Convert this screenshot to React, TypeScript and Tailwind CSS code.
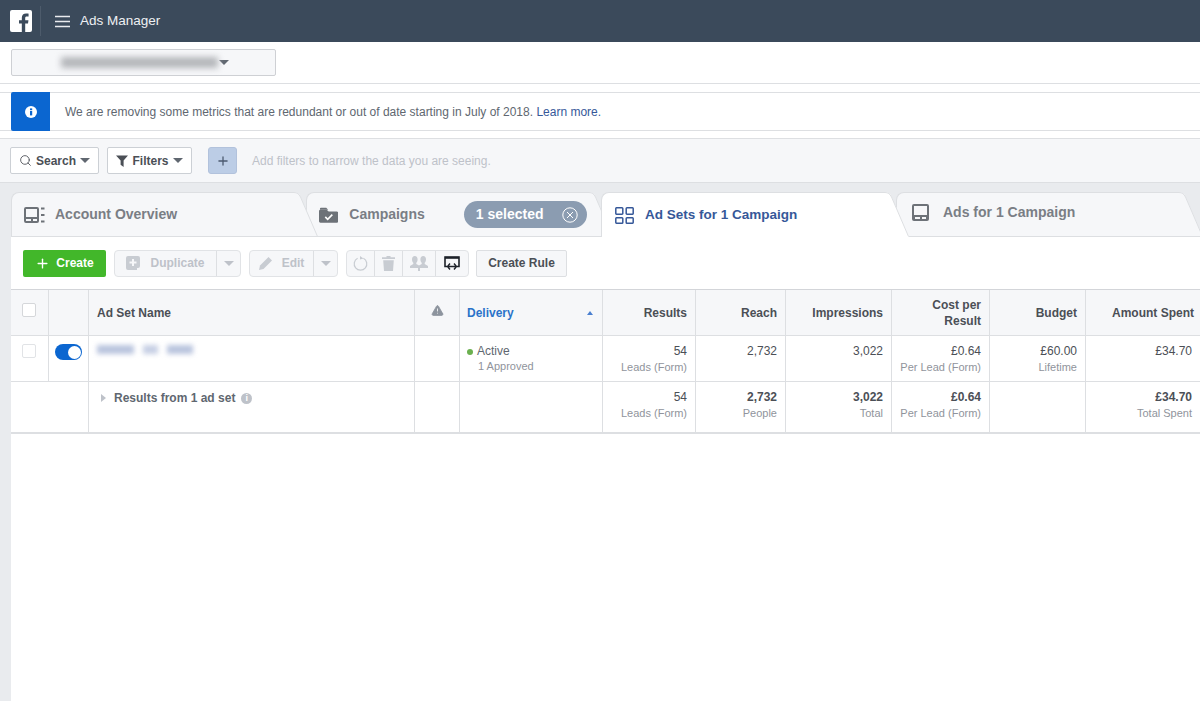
import type { ReactNode } from 'react';
import { Plus, Search, TriangleAlert } from 'lucide-react';

const Caret = ({ className = 'border-t-[#606770]' }: { className?: string }) => (
  <span className={`inline-block h-0 w-0 border-x-[5px] border-t-[5px] border-x-transparent ${className}`} />
);

function FbLogo() {
  return (
    <svg width="22" height="22" viewBox="0 0 22 22">
      <rect x="0" y="0" width="22" height="22" rx="2" fill="#fff" />
      <path
        d="M15.2 22v-8.4h2.8l.45-3.3H15.2V8.2c0-.95.27-1.6 1.63-1.6h1.74V3.65c-.3-.04-1.33-.13-2.53-.13-2.5 0-4.22 1.53-4.22 4.33v2.45H9v3.3h2.82V22z"
        fill="#3b4a5b"
      />
    </svg>
  );
}

function TabEar({ active }: { active?: boolean }) {
  const fill = active ? '#fff' : '#f6f7f9';
  return (
    <svg width="26" height="45" viewBox="0 0 26 45" className="shrink-0">
      <path d="M0 0H2C5 0 7 1.5 8.5 4.5L26 45H0Z" fill={fill} />
      <path d="M0 .5H2C5 .5 7 2 8.5 5L25.5 44.5" fill="none" stroke="#dddfe2" />
      {!active && <path d="M0 44.5H26" stroke="#dddfe2" />}
    </svg>
  );
}

function Tab({
  width,
  active,
  className = '',
  children,
}: {
  width: string;
  active?: boolean;
  className?: string;
  children: ReactNode;
}) {
  return (
    <div className={`relative flex h-[45px] shrink-0 ${className}`}>
      <div
        className={`flex items-center rounded-tl-lg border-t border-l border-[#dddfe2] ${width} ${
          active ? 'bg-white' : 'border-b bg-[#f6f7f9]'
        }`}
      >
        {children}
      </div>
      <TabEar active={active} />
    </div>
  );
}

const Sep = () => <span className="h-full w-px bg-[#dddfe2]" />;

function DisabledButton({ icon, label, width }: { icon: ReactNode; label: string; width: string }) {
  return (
    <div className={`flex h-[27px] items-center rounded-sm border border-[#e1e3e6] bg-[#f6f7f9] text-[12px] font-bold text-[#bec2c9] ${width}`}>
      <span className="flex flex-1 items-center justify-center gap-[10px]">
        {icon}
        {label}
      </span>
      <Sep />
      <span className="flex w-[23px] justify-center">
        <Caret className="border-t-[#bec2c9]" />
      </span>
    </div>
  );
}

const COLS = 'grid-cols-[38px_40px_326px_45px_143px_93px_90px_106px_98px_96px_114px]';
const CELL = 'border-r border-[#dddfe2]';

function Metric({ value, sub, bold }: { value: string; sub?: string; bold?: boolean }) {
  return (
    <div className={`${CELL} px-2 pt-[8px] text-right last:border-r-0`}>
      <div className={`text-[12px] leading-[15px] text-[#4b4f56] ${bold ? 'font-bold' : ''}`}>{value}</div>
      {sub && <div className="mt-[1px] text-[11px] leading-[15px] text-[#90949c]">{sub}</div>}
    </div>
  );
}

function HeadCell({ children, className = '' }: { children: ReactNode; className?: string }) {
  return (
    <div className={`${CELL} flex items-center justify-end px-2 text-right text-[12px] leading-[16px] font-bold text-[#4b4f56] last:border-r-0 ${className}`}>
      {children}
    </div>
  );
}

const CheckBox = ({ faint }: { faint?: boolean }) => (
  <span className={`block h-[14px] w-[14px] rounded-[2px] border bg-white ${faint ? 'border-[#e1e3e6]' : 'border-[#d5d7da]'}`} />
);

export default function App() {
  return (
    <div className="flex h-[701px] w-full flex-col overflow-hidden bg-white font-['Liberation_Sans',Arial,sans-serif]">
      {/* top bar */}
      <header className="flex h-[42px] shrink-0 items-center bg-[#3b4a5b] pl-[10px]">
        <FbLogo />
        <span className="ml-[8px] h-[30px] w-px bg-[#4d5b6b]" />
        <svg width="15" height="13" viewBox="0 0 15 13" className="ml-[14px]">
          <path d="M0 1.5H15M0 6.5H15M0 11.5H15" stroke="#e9ebee" strokeWidth="1.3" />
        </svg>
        <span className="ml-[10px] text-[13.5px] text-[#eef0f3]">Ads Manager</span>
      </header>

      {/* account picker */}
      <div className="flex h-[42px] shrink-0 items-center border-b border-[#dddfe2] pl-[11px]">
        <div className="flex h-[27px] w-[265px] items-center rounded-[2px] border border-[#ced0d4] bg-[#f6f7f9] pl-[49px]">
          <span className="h-[11px] w-[157px] bg-[#b4b6ba] blur-[3px]" />
          <span className="ml-[1px] flex">
            <Caret />
          </span>
        </div>
      </div>

      {/* notice */}
      <div className="mt-[8px] flex h-[39px] shrink-0 items-center border-y border-[#dddfe2] pl-[11px]">
        <div className="flex h-[39px] w-[39px] items-center justify-center rounded-l-[2px] bg-[#0b66d0]">
          <svg width="12" height="12" viewBox="0 0 12 12">
            <circle cx="6" cy="6" r="6" fill="#fff" />
            <rect x="5" y="5" width="2.2" height="4.4" fill="#0b66d0" />
            <rect x="5" y="2.4" width="2.2" height="1.8" fill="#0b66d0" />
          </svg>
        </div>
        <p className="ml-[15px] text-[12px] text-[#606770]">
          We are removing some metrics that are redundant or out of date starting in July of 2018.{' '}
          <span className="text-[#365899]">Learn more.</span>
        </p>
      </div>

      {/* filters */}
      <div className="mt-[7px] flex h-[45px] shrink-0 items-center border-y border-[#dddfe2] bg-[#f6f7f9] pl-[10px]">
        <button className="flex h-[27px] w-[89px] items-center justify-center gap-[4px] rounded-[2px] border border-[#ccd0d5] bg-white text-[12px] font-bold text-[#4b4f56]">
          <Search size={13} strokeWidth={1.6} />
          Search
          <Caret />
        </button>
        <button className="ml-[8px] flex h-[27px] w-[85px] items-center justify-center gap-[4px] rounded-[2px] border border-[#ccd0d5] bg-white text-[12px] font-bold text-[#4b4f56]">
          <svg width="12" height="12" viewBox="0 0 12 12">
            <path d="M0 .5H12L7.6 5.6V12L4.6 9.8V5.6Z" fill="#4b4f56" />
          </svg>
          Filters
          <Caret />
        </button>
        <button className="ml-[16px] flex h-[27px] w-[29px] items-center justify-center rounded-[3px] border border-[#b2c2dc] bg-[#bccde6] text-[#4b5a70]">
          <Plus size={14} strokeWidth={2.2} />
        </button>
        <span className="ml-[15px] text-[12px] text-[#bec2c9]">Add filters to narrow the data you are seeing.</span>
      </div>

      {/* main area */}
      <div className="flex min-h-0 flex-1 bg-[#e9ebee] pl-[11px]">
        <div className="flex min-w-0 flex-1 flex-col">
          {/* tabs */}
          <div className="flex h-[54px] shrink-0 items-end overflow-hidden">
            <Tab width="w-[281px]" className="z-20">
              <svg width="21" height="16" viewBox="0 0 21 16" className="ml-[12px]">
                <path d="M2 0H13a2 2 0 0 1 2 2V14a2 2 0 0 1-2 2H2a2 2 0 0 1-2-2V2a2 2 0 0 1 2-2ZM2 2V10H13V2ZM2 12V14H7V12ZM9 12V14H13V12Z" fill="#6d7278" fillRule="evenodd" />
                <path d="M17 1.5H20.5M17 8H20.5M17 14.5H20.5" stroke="#6d7278" strokeWidth="1.8" />
              </svg>
              <span className="ml-[10px] text-[14px] font-bold text-[#7a7e85]">Account Overview</span>
            </Tab>
            <Tab width="w-[281px]" className="z-10 -ml-[12px]">
              <svg width="20" height="16" viewBox="0 0 20 16" className="ml-[12px]">
                <path d="M1.5 2.5H8L10 4.5H18.5A1.5 1.5 0 0 1 20 6V14.5A1.5 1.5 0 0 1 18.5 16H1.5A1.5 1.5 0 0 1 0 14.5V4A1.5 1.5 0 0 1 1.5 2.5Z" fill="#6d7278" />
                <path d="M1 2.2V1.4A1 1 0 0 1 2 .4H7.5L9.5 2.6H1Z" fill="#6d7278" />
                <path d="M6.5 10L9 12.5L13.8 7.6" fill="none" stroke="#fff" strokeWidth="1.7" />
              </svg>
              <span className="ml-[11px] text-[14px] font-bold text-[#7a7e85]">Campaigns</span>
              <span className="ml-[39px] flex h-[27px] w-[127px] items-center justify-between rounded-full bg-[#8b9cb1] pr-[9px] pl-[12px] text-[14px] font-bold text-white">
                1 selected
                <svg width="16" height="16" viewBox="0 0 16 16">
                  <circle cx="8" cy="8" r="7.2" fill="none" stroke="#fff" strokeWidth="1" />
                  <path d="M5 5L11 11M11 5L5 11" stroke="#fff" strokeWidth="1" />
                </svg>
              </span>
            </Tab>
            <Tab width="w-[282px]" active className="z-30 -ml-[12px]">
              <svg width="19" height="17" viewBox="0 0 19 17" className="ml-[13px]">
                <path d="M1.5 .8H7A.8.8 0 0 1 7.8 1.6V6.4A.8.8 0 0 1 7 7.2H1.5A.8.8 0 0 1 .8 6.4V1.6A.8.8 0 0 1 1.5.8ZM12 .8H17.5A.8.8 0 0 1 18.2 1.6V6.4A.8.8 0 0 1 17.5 7.2H12A.8.8 0 0 1 11.2 6.4V1.6A.8.8 0 0 1 12 .8ZM1.5 10.8H7A.8.8 0 0 1 7.8 11.6V15.4A.8.8 0 0 1 7 16.2H1.5A.8.8 0 0 1 .8 15.4V11.6A.8.8 0 0 1 1.5 10.8ZM12 10.8H17.5A.8.8 0 0 1 18.2 11.6V15.4A.8.8 0 0 1 17.5 16.2H12A.8.8 0 0 1 11.2 15.4V11.6A.8.8 0 0 1 12 10.8Z" fill="none" stroke="#365899" strokeWidth="1.5" />
              </svg>
              <span className="ml-[11px] text-[13.5px] font-bold text-[#365899]">Ad Sets for 1 Campaign</span>
            </Tab>
            <Tab width="w-[281px]" className="z-10 -ml-[13px]">
              <svg width="17" height="17" viewBox="0 0 17 17" className="ml-[15px] -mt-[4px]">
                <path d="M2 0H15A2 2 0 0 1 17 2V15A2 2 0 0 1 15 17H2A2 2 0 0 1 0 15V2A2 2 0 0 1 2 0ZM2 2V11H15V2ZM3 13V15H8V13ZM10 13V15H14V13Z" fill="#6d7278" fillRule="evenodd" />
              </svg>
              <span className="ml-[14px] -mt-[4px] text-[14px] font-bold text-[#7a7e85]">Ads for 1 Campaign</span>
            </Tab>
          </div>

          <div className="min-h-0 flex-1 bg-white">
            {/* toolbar */}
            <div className="flex h-[52px] items-center pl-[12px]">
              <button className="flex h-[27px] w-[83px] items-center justify-center gap-[6px] rounded-[2px] bg-[#42b72a] text-[12px] font-bold text-white">
                <Plus size={15} strokeWidth={2.2} />
                Create
              </button>
              <div className="ml-[8px] flex items-center gap-[8px]">
                <DisabledButton
                  width="w-[127px]"
                  label="Duplicate"
                  icon={
                    <svg width="14" height="14" viewBox="0 0 14 14">
                      <path d="M2 0H12A2 2 0 0 1 14 2V10A2 2 0 0 1 12 12H11V14H2A2 2 0 0 1 0 12V2A2 2 0 0 1 2 0ZM6 3V5.5H3.5V7.5H6V10H8V7.5H10.5V5.5H8V3Z" fill="#c8ccd2" fillRule="evenodd" />
                    </svg>
                  }
                />
                <DisabledButton
                  width="w-[89px]"
                  label="Edit"
                  icon={
                    <svg width="13" height="13" viewBox="0 0 13 13">
                      <path d="M9.5 0L13 3.5L4.5 12L0 13L1 8.5Z" fill="#c8ccd2" />
                    </svg>
                  }
                />
                <div className="flex h-[27px] items-stretch rounded-sm border border-[#e1e3e6] bg-[#f6f7f9]">
                  <span className="flex w-[27px] items-center justify-center">
                    <svg width="15" height="15" viewBox="0 0 15 15">
                      <path d="M4.6 2.2A6.3 6.3 0 1 0 10.4 2.2" fill="none" stroke="#c8ccd2" strokeWidth="1.2" />
                      <path d="M7 0V3.5L10.5 2.4Z" fill="#c8ccd2" />
                    </svg>
                  </span>
                  <Sep />
                  <span className="flex w-[27px] items-center justify-center">
                    <svg width="13" height="15" viewBox="0 0 13 15">
                      <path d="M4.5 0H8.5V1.2H13V3H0V1.2H4.5ZM1.2 4.2H11.8L11 15H2Z" fill="#c8ccd2" />
                    </svg>
                  </span>
                  <Sep />
                  <span className="flex w-[32px] items-center justify-center">
                    <svg width="18" height="15" viewBox="0 0 18 15">
                      <path d="M4.8 0C6.6 0 7.6 1.5 7.6 3.2C7.6 5 7 6 6.3 6.8V8L9 9.6L11.7 8V6.8C11 6 10.4 5 10.4 3.2C10.4 1.5 11.4 0 13.2 0S16 1.5 16 3.2C16 5 15.4 6 14.7 6.8V8L18 10V12H10V15H8V12H0V10L3.3 8V6.8C2.6 6 2 5 2 3.2C2 1.5 3 0 4.8 0Z" fill="#c8ccd2" />
                    </svg>
                  </span>
                  <Sep />
                  <span className="flex w-[32px] items-center justify-center">
                    <svg width="16" height="15" viewBox="0 0 16 15">
                      <path d="M3 10.5H1V1H15V10.5H13" fill="none" stroke="#1d2129" strokeWidth="1.6" />
                      <path d="M1 1.8H15" stroke="#1d2129" strokeWidth="2" />
                      <path d="M6 7.5L3.5 10.5L6 13.5M10 7.5L12.5 10.5L10 13.5M3.5 10.5H12.5" fill="none" stroke="#1d2129" strokeWidth="1.4" />
                    </svg>
                  </span>
                </div>
              </div>
              <button className="ml-[7px] h-[27px] w-[91px] rounded-[2px] border border-[#dddfe2] bg-[#f6f7f9] text-[12px] font-bold text-[#4b4f56]">
                Create Rule
              </button>
            </div>

            {/* table */}
            <div className="border-y-2 border-t border-[#d3d5d9] [border-bottom-color:#dddfe2]">
              <div className={`grid h-[46px] ${COLS} border-b border-[#dddfe2] bg-[#f6f7f9]`}>
                <div className={`${CELL} flex justify-center pt-[13px] pr-[1px]`}>
                  <CheckBox />
                </div>
                <div className={CELL} />
                <div className={`${CELL} flex items-center pl-[8px] text-[12px] font-bold text-[#4b4f56]`}>Ad Set Name</div>
                <div className={`${CELL} flex justify-center pt-[14px]`}>
                  <TriangleAlert size={13} fill="#8d949e" stroke="#8d949e" strokeWidth={1.5} className="[&>path:nth-child(n+2)]:stroke-white" />
                </div>
                <div className={`${CELL} flex items-center justify-between pr-[9px] pl-[7px] text-[12px] font-bold text-[#2a73c9]`}>
                  Delivery
                  <span className="h-0 w-0 border-x-[3.5px] border-b-[4px] border-x-transparent border-b-[#4a7fd0]" />
                </div>
                <HeadCell>Results</HeadCell>
                <HeadCell>Reach</HeadCell>
                <HeadCell>Impressions</HeadCell>
                <HeadCell>
                  Cost per
                  <br />
                  Result
                </HeadCell>
                <HeadCell>Budget</HeadCell>
                <HeadCell className="pr-[6px]">Amount Spent</HeadCell>
              </div>

              <div className={`grid h-[46px] ${COLS} border-b border-[#dddfe2]`}>
                <div className={`${CELL} flex justify-center pt-[8px] pr-[1px]`}>
                  <CheckBox faint />
                </div>
                <div className={`${CELL} flex justify-center pt-[8px]`}>
                  <span className="flex h-[16px] w-[27px] items-center justify-end rounded-full bg-[#0b66d0] pr-[1px]">
                    <span className="h-[13px] w-[13px] rounded-full bg-white" />
                  </span>
                </div>
                <div className={`${CELL} pt-[9px] pl-[8px]`}>
                  <div className="flex gap-[9px] blur-[2.5px]">
                    <span className="h-[9px] w-[37px] bg-[#b9c4de]" />
                    <span className="h-[9px] w-[15px] bg-[#c6cfe4]" />
                    <span className="h-[9px] w-[26px] bg-[#b9c4de]" />
                  </div>
                </div>
                <div className={CELL} />
                <div className={`${CELL} pt-[8px] pl-[7px]`}>
                  <div className="flex items-center gap-[4px] text-[12px] leading-[15px] text-[#606770]">
                    <span className="h-[6px] w-[6px] rounded-full bg-[#6bb04f]" />
                    Active
                  </div>
                  <div className="pl-[11px] text-[11px] leading-[15px] text-[#90949c]">1 Approved</div>
                </div>
                <Metric value="54" sub="Leads (Form)" />
                <Metric value="2,732" />
                <Metric value="3,022" />
                <Metric value="£0.64" sub="Per Lead (Form)" />
                <Metric value="£60.00" sub="Lifetime" />
                <Metric value="£34.70" />
              </div>

              <div className={`grid h-[50px] ${COLS}`}>
                <div className={`${CELL} col-span-2`} />
                <div className={`${CELL} flex items-start gap-[8px] pt-[9px] pl-[12px]`}>
                  <span className="mt-[3px] h-0 w-0 border-y-[4px] border-l-[5px] border-y-transparent border-l-[#bec2c9]" />
                  <span className="flex items-center gap-[6px] text-[12px] leading-[15px] font-bold text-[#606770]">
                    Results from 1 ad set
                    <span className="flex h-[11px] w-[11px] items-center justify-center rounded-full bg-[#bec2c9] text-[9px] leading-none text-white">i</span>
                  </span>
                </div>
                <div className={CELL} />
                <div className={CELL} />
                <Metric value="54" sub="Leads (Form)" />
                <Metric value="2,732" sub="People" bold />
                <Metric value="3,022" sub="Total" bold />
                <Metric value="£0.64" sub="Per Lead (Form)" bold />
                <div className={CELL} />
                <Metric value="£34.70" sub="Total Spent" bold />
              </div>
            </div>
          </div>
        </div>
      </div>
    </div>
  );
}
